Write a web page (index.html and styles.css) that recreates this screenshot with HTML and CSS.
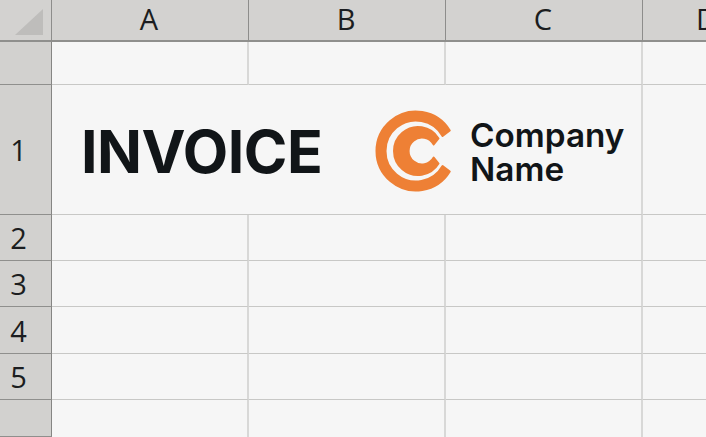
FILE: index.html
```html
<!DOCTYPE html>
<html lang="en">

<head>
    <meta charset="UTF-8">
    <meta name="viewport" content="width=device-width, initial-scale=1.0">
    <title>Invoice</title>
    <link rel="stylesheet" href="styles.css">
</head>

<body>

    <div class="sheet">
        <!-- Column headers -->
        <div class="corner">
            <svg class="corner-mark" width="30" height="28" viewBox="0 0 30 28">
                <polygon points="29,1 29,27 1,27" fill="#bebdbb" />
            </svg>
        </div>
        <div class="col-head">A</div>
        <div class="col-head">B</div>
        <div class="col-head">C</div>
        <div class="col-head col-clip">D</div>

        <!-- Blank row above the heading -->
        <div class="row-head"></div>
        <div class="cell"></div>
        <div class="cell"></div>
        <div class="cell"></div>
        <div class="cell cell-last"></div>

        <!-- Row 1, A to C merged -->
        <div class="row-head">1</div>
        <div class="cell merged">
            <div class="invoice-title">INVOICE</div>
            <div class="brand">
                <svg class="brand-logo" width="78" height="82" viewBox="0 0 78 82">
                    <path class="logo-shape" d="M74.760 20.500A39.500 39.500 0 1 0 74.760 61.500L67.560 56A30.500 30.500 0 1 1 67.560 26Z" />
                    <path class="logo-shape" d="M63.500 28.500A24 24 0 1 0 63.500 53.500L58.700 47.500A13.400 13.400 0 1 1 58.700 34.500Z" />
                </svg>
                <div class="brand-name">Company<br>Name</div>
            </div>
        </div>
        <div class="cell cell-last"></div>

        <div class="row-head">2</div>
        <div class="cell"></div>
        <div class="cell"></div>
        <div class="cell"></div>
        <div class="cell cell-last"></div>

        <div class="row-head">3</div>
        <div class="cell"></div>
        <div class="cell"></div>
        <div class="cell"></div>
        <div class="cell cell-last"></div>

        <div class="row-head">4</div>
        <div class="cell"></div>
        <div class="cell"></div>
        <div class="cell"></div>
        <div class="cell cell-last"></div>

        <div class="row-head">5</div>
        <div class="cell"></div>
        <div class="cell"></div>
        <div class="cell"></div>
        <div class="cell cell-last"></div>

        <div class="row-head"></div>
        <div class="cell cell-end"></div>
        <div class="cell cell-end"></div>
        <div class="cell cell-end"></div>
        <div class="cell cell-last cell-end"></div>
    </div>

</body>

</html>
```

FILE: styles.css
```css
html,
body {
    margin: 0;
    padding: 0;
    height: 100%;
    overflow: hidden;
}

body {
    font-family: "Open Sans", "Liberation Sans", sans-serif;
    background-color: #f6f6f6;
}

.sheet {
    display: grid;
    grid-template-columns: 52px 197px 197px 197px 63px;
    grid-template-rows: 42px 43px 130px 46px 46px 47px 46px 37px;
    width: 706px;
    height: 437px;
}

.corner,
.col-head {
    display: flex;
    align-items: center;
    justify-content: center;
    box-sizing: border-box;
    background-color: #d3d2d0;
    border-right: 1px solid #8d8d8b;
    border-bottom: 2px solid #8f8f8d;
    color: #1b1d20;
    font-size: 29px;
    padding: 0 2px 3px 0;
}

.corner {
    align-items: flex-start;
    justify-content: flex-start;
    padding: 8px 0 0 14px;
}

.corner-mark {
    display: block;
}

.col-clip {
    justify-content: flex-start;
    padding-left: 53px;
    border-right: none;
    overflow: hidden;
}

.row-head {
    display: flex;
    align-items: center;
    justify-content: center;
    box-sizing: border-box;
    background-color: #d2d1cf;
    border-right: 1px solid #858583;
    border-bottom: 1px solid #8f8f8d;
    color: #1b1d20;
    font-size: 29px;
    padding: 0 14px 0 0;
}

.cell {
    box-sizing: border-box;
    background-color: #f6f6f6;
    border-right: 2px solid #d8d8d7;
    border-bottom: 1px solid #c8c8c6;
}

.cell-last {
    border-right: none;
}

.cell-end {
    border-bottom: none;
}

.merged {
    grid-column: span 3;
    display: flex;
    align-items: center;
    padding-left: 29px;
}

.invoice-title {
    width: 294px;
    margin-top: 3px;
    font-family: "Inter", "Liberation Sans", sans-serif;
    font-size: 59px;
    font-weight: 700;
    color: #111518;
    letter-spacing: -0.5px;
}

.brand {
    display: flex;
    align-items: center;
    padding-top: 3px;
}

.brand-logo {
    display: block;
    flex: none;
    overflow: visible;
}

.logo-shape {
    fill: #ee8035;
    stroke: #ee8035;
    stroke-width: 2;
    stroke-linejoin: round;
}

.brand-name {
    margin: 2px 0 0 17px;
    font-family: "Inter", "Liberation Sans", sans-serif;
    font-size: 33.3px;
    font-weight: 600;
    line-height: 34px;
    color: #111518;
}
```
